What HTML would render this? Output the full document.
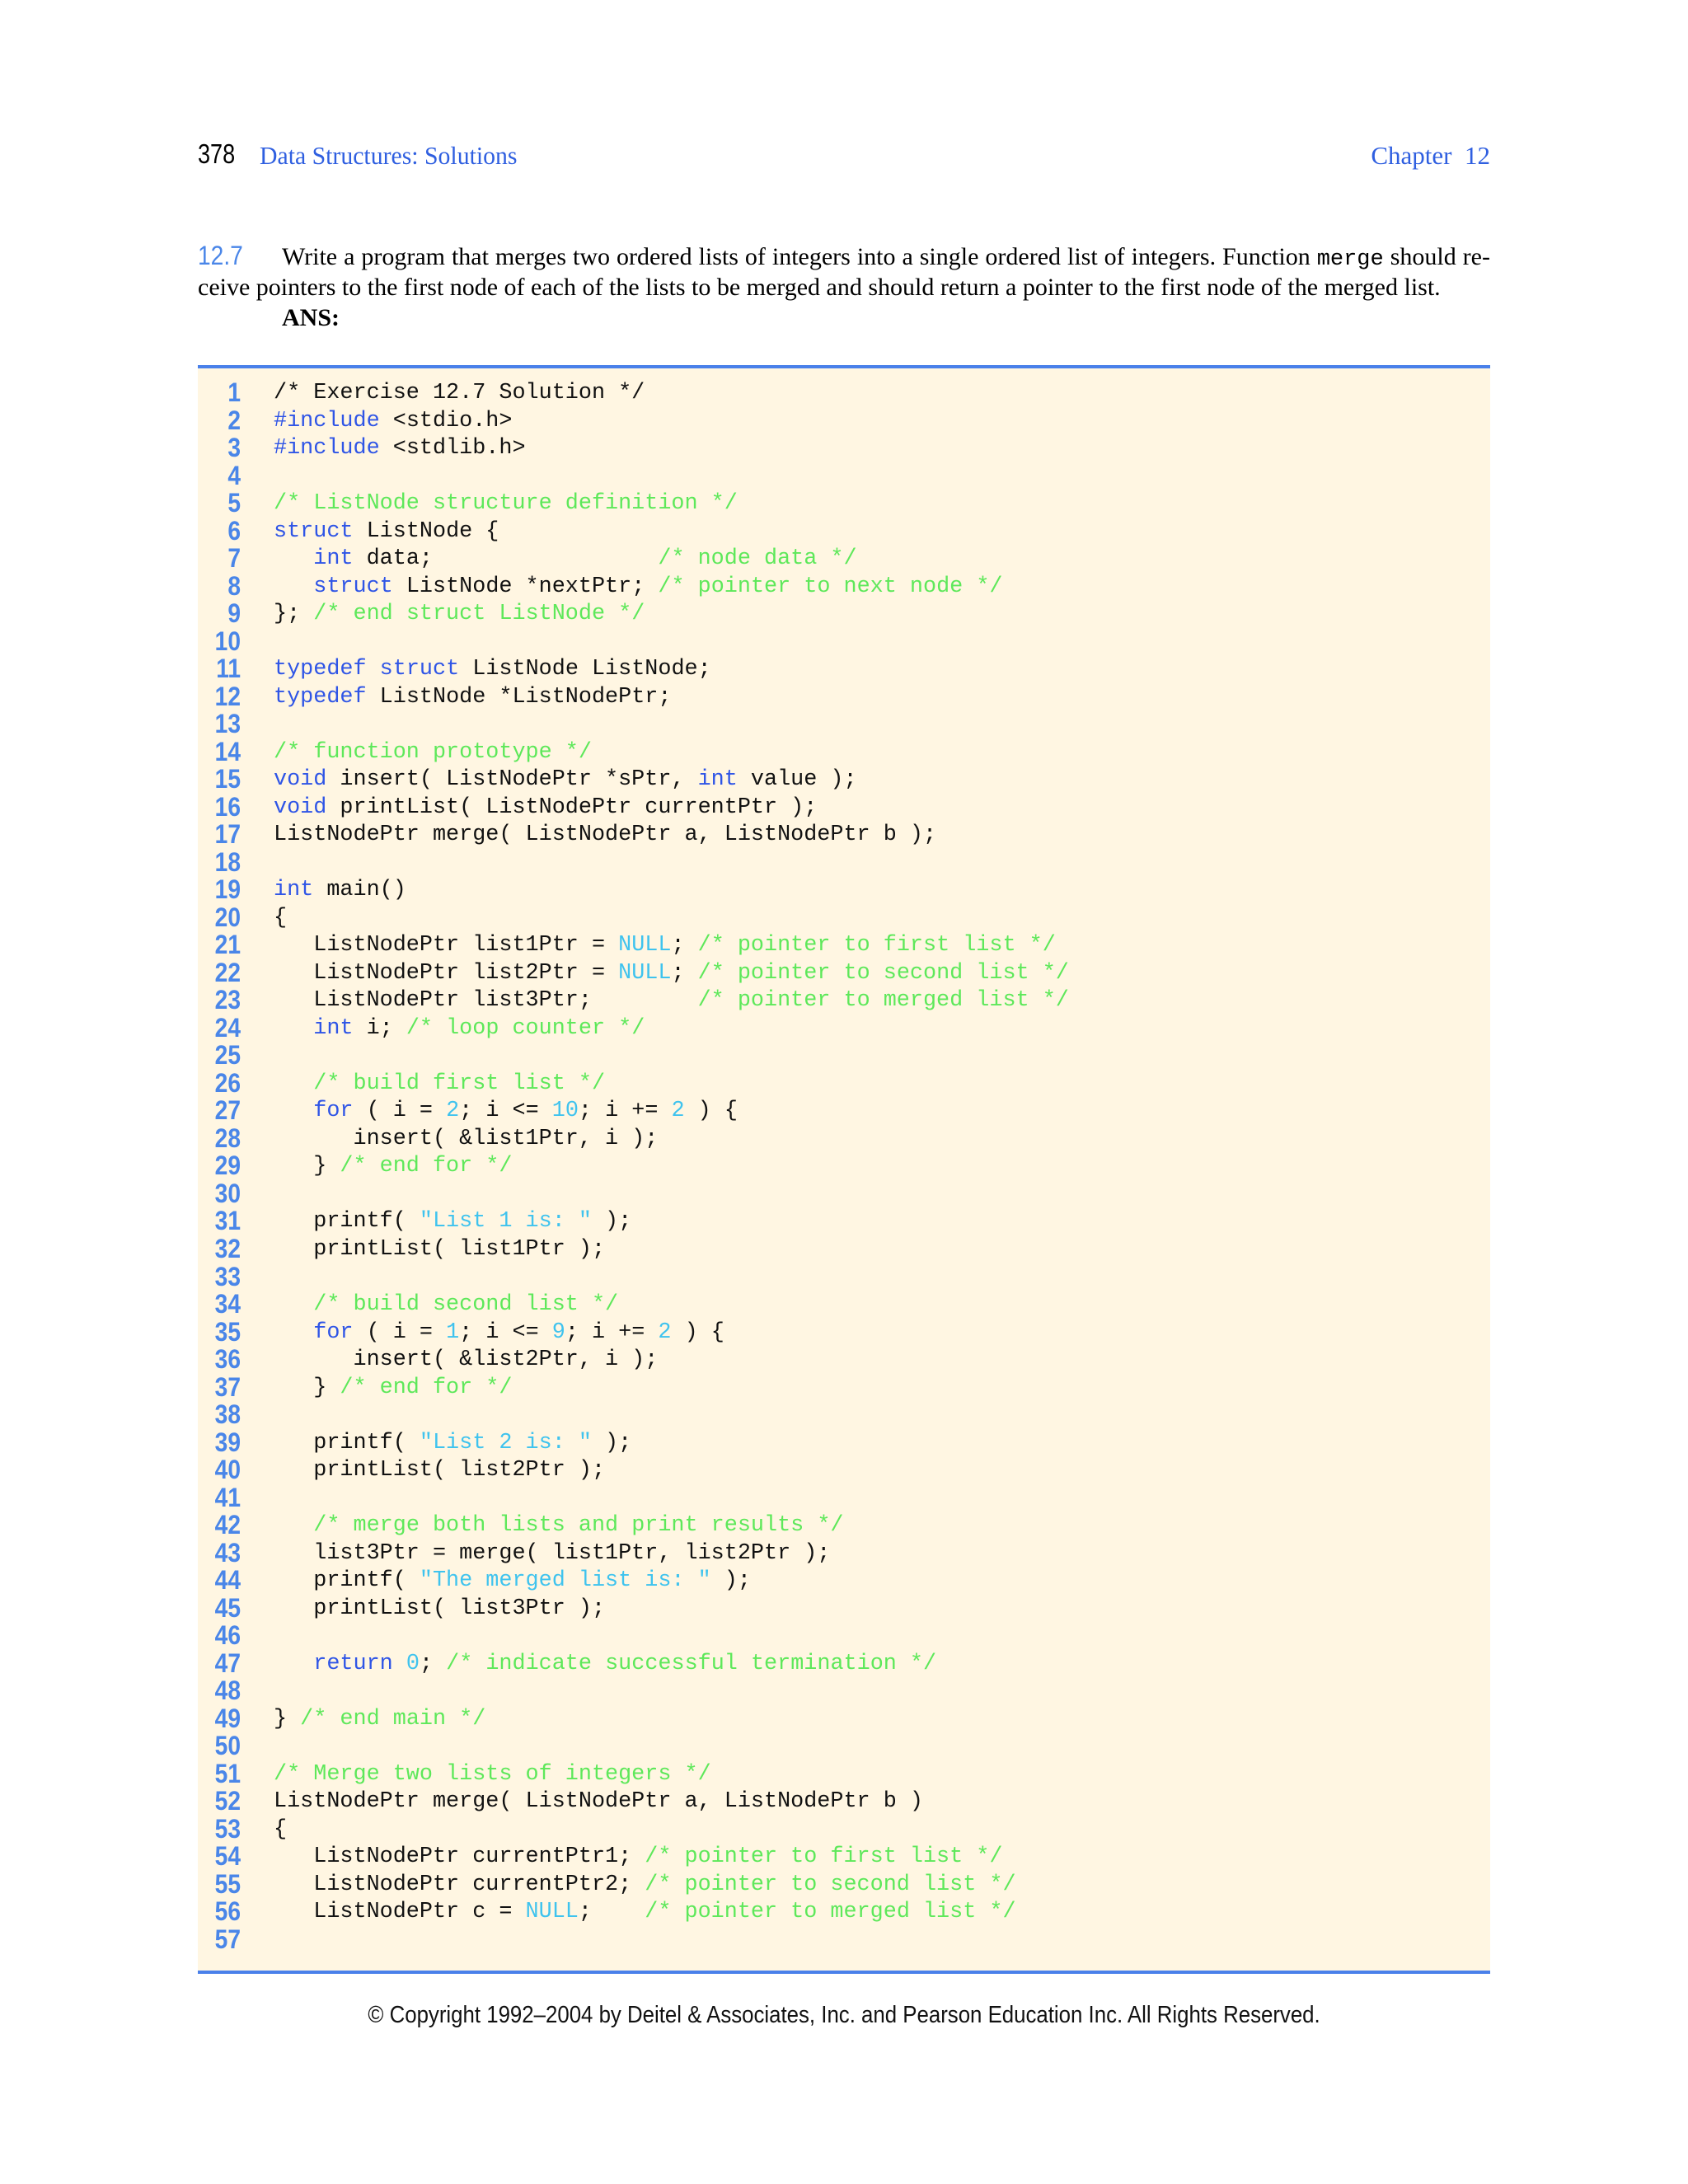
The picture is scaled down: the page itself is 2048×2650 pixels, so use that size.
<!DOCTYPE html>
<html><head><meta charset="utf-8"><style>
html,body{margin:0;padding:0;background:#fff;}
body{width:2048px;height:2650px;position:relative;overflow:hidden;}
.abs{position:absolute;}
.hdr{top:171px;font-family:"Liberation Serif",serif;font-size:31px;color:#2f5fe0;white-space:nowrap;}
.pn{left:240px;top:168px;font-family:"Liberation Sans",sans-serif;font-size:33px;color:#000;transform:scaleX(.82);transform-origin:left;}
.para{font-family:"Liberation Serif",serif;font-size:30px;color:#000;line-height:37px;}
.box{left:240px;top:443px;width:1568px;height:1952px;background:#fff6e2;border-top:4px solid #4a80ea;border-bottom:4px solid #4a80ea;box-sizing:border-box;}
.nums{left:230px;top:460px;width:62px;text-align:right;font-family:"Liberation Sans",sans-serif;font-weight:bold;font-size:32px;line-height:33.52px;color:#4a86e8;white-space:pre;transform:scaleX(.88);transform-origin:right;}
pre.code{position:absolute;left:332px;top:461px;margin:0;font-family:"Liberation Mono",monospace;font-size:26.8px;line-height:33.52px;color:#111;}
.k{color:#2f55e6}.c{color:#5ee85a}.s{color:#3fc3ee}
</style></head><body>
<div class="abs pn">378</div>
<div class="abs hdr" style="left:315px;transform:scaleX(.96);transform-origin:left;">Data Structures: Solutions</div>
<div class="abs hdr" style="right:240px;">Chapter&nbsp;&nbsp;12</div>

<div class="abs" style="left:240px;top:292px;font-family:'Liberation Sans',sans-serif;font-size:32px;color:#4a86e8;transform:scaleX(.88);transform-origin:left;">12.7</div>
<div class="abs para" style="left:342px;top:293px;width:1466px;text-align:justify;text-align-last:justify;white-space:nowrap;word-spacing:-2px;">Write a program that merges two ordered lists of integers into a single ordered list of integers. Function <span style="font-family:'Liberation Mono',monospace;font-size:27px;">merge</span> should re-</div>
<div class="abs para" style="left:240px;top:330px;width:1560px;white-space:nowrap;">ceive pointers to the first node of each of the lists to be merged and should return a pointer to the first node of the merged list.</div>
<div class="abs para" style="left:342px;top:367px;font-weight:bold;">ANS:</div>

<div class="abs box"></div>
<div class="abs nums">1
2
3
4
5
6
7
8
9
10
11
12
13
14
15
16
17
18
19
20
21
22
23
24
25
26
27
28
29
30
31
32
33
34
35
36
37
38
39
40
41
42
43
44
45
46
47
48
49
50
51
52
53
54
55
56
57</div>
<pre class="code">/* Exercise 12.7 Solution */
<span class="k">#include</span> &lt;stdio.h&gt;
<span class="k">#include</span> &lt;stdlib.h&gt;

<span class="c">/* ListNode structure definition */</span>
<span class="k">struct</span> ListNode {
   <span class="k">int</span> data;                 <span class="c">/* node data */</span>
   <span class="k">struct</span> ListNode *nextPtr; <span class="c">/* pointer to next node */</span>
}; <span class="c">/* end struct ListNode */</span>

<span class="k">typedef</span> <span class="k">struct</span> ListNode ListNode;
<span class="k">typedef</span> ListNode *ListNodePtr;

<span class="c">/* function prototype */</span>
<span class="k">void</span> insert( ListNodePtr *sPtr, <span class="k">int</span> value );
<span class="k">void</span> printList( ListNodePtr currentPtr );
ListNodePtr merge( ListNodePtr a, ListNodePtr b );

<span class="k">int</span> main()
{
   ListNodePtr list1Ptr = <span class="s">NULL</span>; <span class="c">/* pointer to first list */</span>
   ListNodePtr list2Ptr = <span class="s">NULL</span>; <span class="c">/* pointer to second list */</span>
   ListNodePtr list3Ptr;        <span class="c">/* pointer to merged list */</span>
   <span class="k">int</span> i; <span class="c">/* loop counter */</span>

   <span class="c">/* build first list */</span>
   <span class="k">for</span> ( i = <span class="s">2</span>; i &lt;= <span class="s">10</span>; i += <span class="s">2</span> ) {
      insert( &amp;list1Ptr, i );
   } <span class="c">/* end for */</span>

   printf( <span class="s">"List 1 is: "</span> );
   printList( list1Ptr );

   <span class="c">/* build second list */</span>
   <span class="k">for</span> ( i = <span class="s">1</span>; i &lt;= <span class="s">9</span>; i += <span class="s">2</span> ) {
      insert( &amp;list2Ptr, i );
   } <span class="c">/* end for */</span>

   printf( <span class="s">"List 2 is: "</span> );
   printList( list2Ptr );

   <span class="c">/* merge both lists and print results */</span>
   list3Ptr = merge( list1Ptr, list2Ptr );
   printf( <span class="s">"The merged list is: "</span> );
   printList( list3Ptr );

   <span class="k">return</span> <span class="s">0</span>; <span class="c">/* indicate successful termination */</span>

} <span class="c">/* end main */</span>

<span class="c">/* Merge two lists of integers */</span>
ListNodePtr merge( ListNodePtr a, ListNodePtr b )
{
   ListNodePtr currentPtr1; <span class="c">/* pointer to first list */</span>
   ListNodePtr currentPtr2; <span class="c">/* pointer to second list */</span>
   ListNodePtr c = <span class="s">NULL</span>;    <span class="c">/* pointer to merged list */</span>
</pre>

<div class="abs" style="left:0;width:2048px;top:2429px;text-align:center;font-family:'Liberation Sans',sans-serif;font-size:29px;color:#111;"><span style="display:inline-block;transform:scaleX(.89);">© Copyright 1992–2004 by Deitel &amp; Associates, Inc. and Pearson Education Inc. All Rights Reserved.</span></div>
</body></html>
